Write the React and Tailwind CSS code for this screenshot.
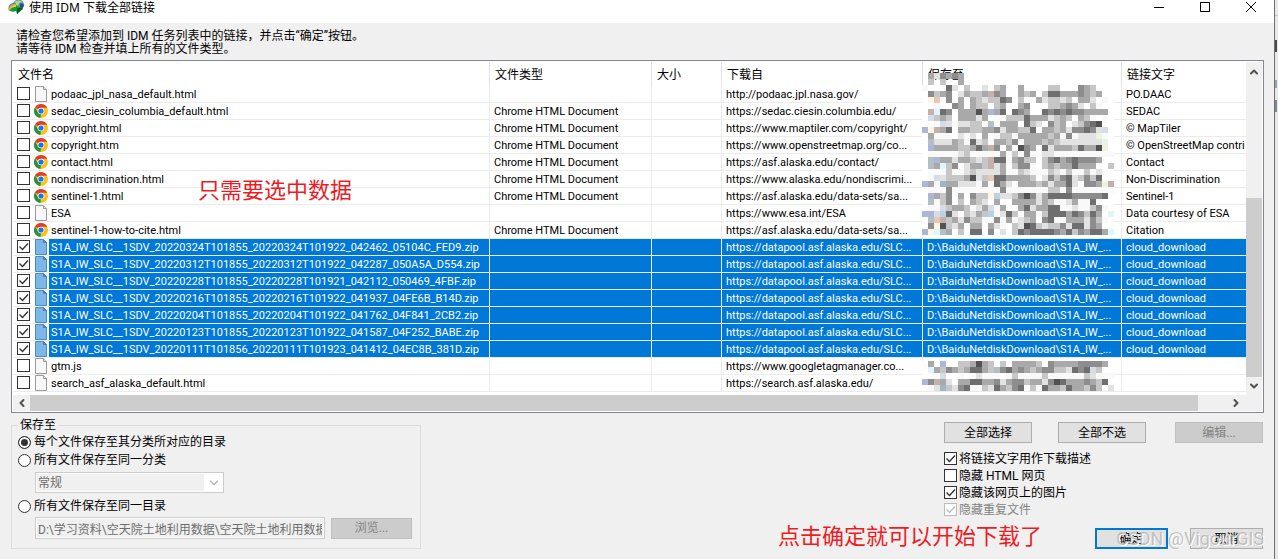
import React from 'react';
import { ChevronDown, ChevronLeft, ChevronRight, ChevronUp } from 'lucide-react';

const CHROME = 'Chrome HTML Document';
const SAVE_PATH = 'D:\\BaiduNetdiskDownload\\S1A_IW_...';

const files = [
  { name: 'podaac_jpl_nasa_default.html', from: 'http://podaac.jpl.nasa.gov/', text: 'PO.DAAC' },
  { name: 'sedac_ciesin_columbia_default.html', type: CHROME, from: 'https://sedac.ciesin.columbia.edu/', text: 'SEDAC' },
  { name: 'copyright.html', type: CHROME, from: 'https://www.maptiler.com/copyright/', text: '© MapTiler' },
  { name: 'copyright.htm', type: CHROME, from: 'https://www.openstreetmap.org/co...', text: '© OpenStreetMap contri' },
  { name: 'contact.html', type: CHROME, from: 'https://asf.alaska.edu/contact/', text: 'Contact' },
  { name: 'nondiscrimination.html', type: CHROME, from: 'https://www.alaska.edu/nondiscrimi...', text: 'Non-Discrimination' },
  { name: 'sentinel-1.html', type: CHROME, from: 'https://asf.alaska.edu/data-sets/sa...', text: 'Sentinel-1' },
  { name: 'ESA', from: 'https://www.esa.int/ESA', text: 'Data courtesy of ESA' },
  { name: 'sentinel-1-how-to-cite.html', type: CHROME, from: 'https://asf.alaska.edu/data-sets/sa...', text: 'Citation' },
  ...[
    'S1A_IW_SLC__1SDV_20220324T101855_20220324T101922_042462_05104C_FED9.zip',
    'S1A_IW_SLC__1SDV_20220312T101855_20220312T101922_042287_050A5A_D554.zip',
    'S1A_IW_SLC__1SDV_20220228T101855_20220228T101921_042112_050469_4FBF.zip',
    'S1A_IW_SLC__1SDV_20220216T101855_20220216T101922_041937_04FE6B_B14D.zip',
    'S1A_IW_SLC__1SDV_20220204T101855_20220204T101922_041762_04F841_2CB2.zip',
    'S1A_IW_SLC__1SDV_20220123T101855_20220123T101922_041587_04F252_BABE.zip',
    'S1A_IW_SLC__1SDV_20220111T101856_20220111T101923_041412_04EC8B_381D.zip',
  ].map((name) => ({
    name,
    from: 'https://datapool.asf.alaska.edu/SLC...',
    saveTo: SAVE_PATH,
    text: 'cloud_download',
    selected: true,
  })),
  { name: 'gtm.js', from: 'https://www.googletagmanager.co...', text: '' },
  { name: 'search_asf_alaska_default.html', from: 'https://search.asf.alaska.edu/', text: '' },
];

const columns = ['文件名', '文件类型', '大小', '下载自', '保存至', '链接文字'];

// One letter per block, light to dark, capitals are the tinted blocks
const shades = {
  w: '#f9f9f9', a: '#e2e2e2', b: '#c6c6c6', c: '#a9a9a9', d: '#8d8d8d', e: '#6f6f6f', f: '#525252',
  P: '#c6b0aa', O: '#e6c9b3', Y: '#fff5e0', C: '#e0f6ff', L: '#d6dde8', V: '#adb5d8', G: '#ecf3e0',
  T: '#9cb6c4', B: '#b9d3e6', S: '#b3bfc4',
};

const topBlocks = [
  '.cadcdc.........................',
  '.b.b..c.........................',
  'w...ea.b..a.bc..c....bb...dcb...',
  '.dbcd.acbbcPdc..cbc.beecccdcbc..',
  '.YOwd.c.cbabbed.b..cabbab.cca.w.',
  '..w..dc.cbb.bc..cd...bbcdca.bw..',
  '.PCed.cccfcVce.edc..edededdcccc.',
  '.Lbcb.cccac.wwbbbecccabcb.cbw.w.',
  '..wLawaabbwSwccc.eba.dbc.abdef..',
  'VYPce.ccbbccdaccbbe.ccbcaddedaL.',
  '.cwww.awa.c.wbbwcccccbcwdwaaaGw.',
  '.SaaacbweabwccbdwcccbcbaaaaaaaG.',
  '.VccccbbcecPd.cwfdc.eacccbeccfG.',
  '.wwwwwabwwwwwcwbwdwwaawwwwwwwwww',
  '.SVccaccbabPeewcdbb.bdecdedddc..',
  '.ScCbd.accbPac.bddw.bcbcceccc..b',
  '.wwwbwwabaaaacwwbawwwbawbwwbwaw.',
  '.wLabbbcfabOeeccccb.adbdeabdbe..',
  'VcwTccaaawcweca.cccbcaccea.ddcGP',
  '.wwwdwwwwwwwwdwwwwwwwbbwdwwwwwww',
  '.Vcbd.c.dbbYBaabdfdaceeeeddddde.',
  '.Swbd.b.cba.c..ccccacbwwacwwew..',
  '.wwLbccbwacLwc..ceacceewwawwbdw.',
  'VVLBea.bacbBwaeb.ccwbeeecedbec.C',
  '.SOPbcadbbwwdwcwabc.dewwcccadbw.',
  '.dYfbac.cc.caw.bafebabbdaeeadc..',
  'VYCSc.b.ee.d.a.bedeeeedcebdceecC',
];

const bottomBlocks = [
  '.c.V..bbcfcb.b.ccccb.dccccddddc.',
  '.CcbdcbceecbSdecdcbcddbbaedeLb..',
  '...L..w.wawww.wbwwwwbwwwwwwbawww',
  'VdPca.cceeccdacddbccadfecccdcbe.',
  '.waTbadew.baecbde.bweccbeccbdb.a',
];

const Mosaic = ({ rows, className }) => (
  <svg
    className={className}
    width="192"
    height={rows.length * 6}
    shapeRendering="crispEdges"
    aria-hidden="true"
  >
    {rows.map((row, y) =>
      [...row].map((key, x) => {
        // the first two rows only hide the start of the heading
        if (rows.length > 10 && y < 2 && (x > 6 || key === '.')) return null;
        return (
          <rect key={`${x}-${y}`} x={x * 6} y={y * 6} width="6" height="6" fill={shades[key] || '#ffffff'} />
        );
      })
    )}
  </svg>
);

const IdmIcon = () => (
  <svg width="17" height="17" viewBox="0 0 17 17" aria-hidden="true">
    <circle cx="10.500" cy="5" r="5.500" fill="#4f8fd6" />
    <path d="M6 3c2-3 6-3 8-1-1 1-3 0-3 2s-2 2-2 3-3-2-3-4z" fill="#b9d96a" />
    <path d="M12 4c2-1 3 0 4 1-1 3-3 4-4 4 1-2-1-3 0-5z" fill="#274b8f" />
    <path d="M1 11C-1 6 3 2 8 3L7 6C5 6 3 8 3 11z" fill="#4a7fd0" />
    <path d="M1 11C0 7 4 3 8 4L7 6C5 6 3 8 3 11z" fill="#e8a13a" />
    <path d="M2 11C1 8 4 5 8 5v2c-2 0-4 2-4 4z" fill="#d9d23c" />
    <path d="M2 11c0-3 3-4 6-4V5l7 4-6 5-1-3c-2 1-4 1-6 0z" fill="#179a2e" />
    <path d="M9 8h6l-6 6z" fill="#0b5c1a" />
  </svg>
);

const ChromeIcon = () => (
  <svg className="mt-px shrink-0" width="14" height="14" viewBox="0 0 14 14" aria-hidden="true">
    <circle cx="7" cy="7" r="7" fill="#fbc116" />
    <path d="M7 7L.94 3.500A7 7 0 0 1 13.060 3.500L13.060 3.800H7z" fill="#e33b2e" />
    <path d="M.94 3.500L4.200 8.600 7 10.200 6.400 14A7 7 0 0 1 .94 3.500z" fill="#229342" />
    <circle cx="7" cy="7" r="3.300" fill="#fff" />
    <circle cx="7" cy="7" r="2.600" fill="#1a73e8" />
  </svg>
);

const PageIcon = ({ selected }) => (
  <svg className="shrink-0" width="14" height="16" viewBox="0 0 14 16" aria-hidden="true">
    <path
      d="M1.500.5h8l3 3v12h-11z"
      fill={selected ? '#7db7e8' : '#f8f8f8'}
      stroke={selected ? '#4a8cc4' : '#9a9a9a'}
    />
    <path
      d="M9.500.5v3h3"
      fill={selected ? '#4a8cc4' : '#dddddd'}
      stroke={selected ? '#3f7fb5' : '#9a9a9a'}
    />
  </svg>
);

const CheckBox = ({ disabled, className = '', ...props }) => (
  <span className={`grid shrink-0 ${className}`}>
    <input
      type="checkbox"
      disabled={disabled}
      className="peer col-start-1 row-start-1 w-[13px] h-[13px] appearance-none border border-[#333333] bg-white disabled:border-[#bcbcbc]"
      {...props}
    />
    <svg
      className="pointer-events-none invisible col-start-1 row-start-1 peer-checked:visible"
      width="13"
      height="13"
      viewBox="0 0 13 13"
      fill="none"
      stroke={disabled ? '#bcbcbc' : '#333333'}
      strokeWidth="1.400"
      aria-hidden="true"
    >
      <path d="M2.500 6.500l3 3 5.500-6" />
    </svg>
  </span>
);

const CheckRow = ({ label, disabled, defaultChecked }) => (
  <label className={`flex h-[17px] items-center gap-0.5 ${disabled ? 'text-[#838383]' : ''}`}>
    <CheckBox disabled={disabled} defaultChecked={defaultChecked} />
    {label}
  </label>
);

const RadioRow = ({ label, defaultChecked }) => (
  <label className="flex h-[18px] items-center gap-[3px]">
    <input
      type="radio"
      name="target"
      defaultChecked={defaultChecked}
      className="w-[13px] h-[13px] appearance-none rounded-full border border-[#333333] bg-white checked:bg-[#333333] checked:shadow-[inset_0_0_0_2px_#ffffff]"
    />
    {label}
  </label>
);

const Button = ({ primary, className = '', ...props }) => (
  <button
    type="button"
    className={`h-[21px] bg-[#e1e1e1] leading-4 disabled:border-[#bfbfbf] disabled:bg-[#cccccc] disabled:text-[#838383] ${
      primary ? 'border-2 border-[#0078d7]' : 'border border-[#adadad]'
    } ${className}`}
    {...props}
  />
);

const FileRow = ({ file }) => {
  const cell = `h-[17px] overflow-hidden whitespace-nowrap border-b border-r border-[#ececec] pb-0 pl-1 pr-0 pt-0.5 leading-[14px] ${
    file.selected ? 'bg-[#0078d7] text-white' : ''
  }`;

  return (
    <tr>
      <td className="h-[17px] border-b border-r border-[#ececec] p-0">
        <div className="flex h-4 items-start">
          <span className="flex h-4 w-9 shrink-0 items-start gap-1 pl-1">
            <CheckBox className="mt-px" defaultChecked={file.selected} aria-label={file.name} />
            {file.type ? <ChromeIcon /> : <PageIcon selected={file.selected} />}
          </span>
          <span
            className={`h-4 min-w-0 flex-1 overflow-hidden whitespace-nowrap pl-0.5 pt-0.5 leading-[14px] ${
              file.selected ? 'bg-[#0078d7] text-white' : ''
            }`}
          >
            {file.name}
          </span>
        </div>
      </td>
      <td className={cell}>{file.type}</td>
      <td className={cell} />
      <td className={cell}>{file.from}</td>
      <td className={cell}>{file.saveTo}</td>
      <td className={`${cell} border-r-0`}>{file.text}</td>
    </tr>
  );
};

const FileList = () => (
  <div className="border border-[#828790] bg-white p-px">
    <div className="flex">
      <div className="relative min-w-0 flex-1 pb-[3px]">
        <table className="w-full table-fixed border-separate border-spacing-0">
          <colgroup>
            <col className="w-[477px]" />
            <col className="w-[162px]" />
            <col className="w-[70px]" />
            <col className="w-[201px]" />
            <col className="w-[199px]" />
            <col />
          </colgroup>
          <thead>
            <tr>
              {columns.map((title) => (
                <th
                  key={title}
                  className="h-[24px] border-r border-[#e0e0e0] pl-[5px] pt-0.5 text-left font-normal last:border-r-0"
                >
                  {title}
                </th>
              ))}
            </tr>
          </thead>
          <tbody className="text-[11px]">
            {files.map((file) => (
              <FileRow key={file.name} file={file} />
            ))}
          </tbody>
        </table>
        <Mosaic rows={topBlocks} className="absolute left-[909px] top-[11px]" />
        <Mosaic rows={bottomBlocks} className="absolute left-[909px] top-[299px]" />
      </div>
      <div className="flex w-4 flex-col items-center bg-[#f0f0f0] text-[#505050]">
        <div className="flex h-[136px] items-start pt-1">
          <ChevronUp size={12} strokeWidth={4} />
        </div>
        <div className="w-full flex-1 bg-[#cdcdcd]" />
        <div className="flex h-[18px] items-center">
          <ChevronDown size={12} strokeWidth={4} />
        </div>
      </div>
    </div>
    <div className="flex h-4 items-stretch bg-[#f0f0f0] text-[#505050]">
      <div className="flex w-[17px] items-center justify-center">
        <ChevronLeft size={12} strokeWidth={4} />
      </div>
      <div className="flex-1 bg-[#cdcdcd]" />
      <div className="flex w-16 items-center justify-end pr-5">
        <ChevronRight size={12} strokeWidth={4} />
      </div>
    </div>
  </div>
);

const SaveTo = () => (
  <fieldset className="w-[410px] border border-[#dcdcdc] pb-[9px] pl-[6px] pr-2">
    <legend className="px-0.5 leading-[15px]">保存至</legend>
    <RadioRow label="每个文件保存至其分类所对应的目录" defaultChecked />
    <RadioRow label="所有文件保存至同一分类" />
    <div className="mb-1 ml-[17px] mt-[3px] grid h-[21px] w-[189px]">
      <select
        disabled
        aria-label="分类"
        className="col-start-1 row-start-1 appearance-none border border-[#cccccc] bg-[#f0f0f0] pl-0.5 leading-4 text-[#6d6d6d] opacity-100 shadow-[inset_0_0_0_1px_#ffffff]"
      >
        <option>常规</option>
      </select>
      <span className="pointer-events-none col-start-1 row-start-1 my-px mr-px flex w-[19px] items-center justify-center justify-self-end bg-white text-[#b0b0b0]">
        <ChevronDown size={14} />
      </span>
    </div>
    <RadioRow label="所有文件保存至同一目录" />
    <div className="ml-[17px] mt-0.5 flex items-center gap-[6px]">
      <input
        type="text"
        disabled
        aria-label="目录"
        defaultValue="D:\学习资料\空天院土地利用数据\空天院土地利用数据"
        className="h-[22px] min-w-0 flex-1 border border-[#cccccc] bg-[#f0f0f0] px-0.5 text-[#6d6d6d] shadow-[inset_0_0_0_1px_#ffffff]"
      />
      <Button disabled className="w-[81px]">浏览...</Button>
    </div>
  </fieldset>
);

const Actions = () => (
  <div className="mr-px flex w-[319px] flex-col justify-between pt-1">
    <div>
      <div className="mb-[7px] flex gap-[26px]">
        <Button className="w-[88px]">全部选择</Button>
        <Button className="w-[88px]">全部不选</Button>
        <Button disabled className="ml-auto w-[88px]">编辑...</Button>
      </div>
      <CheckRow label="将链接文字用作下载描述" defaultChecked />
      <CheckRow label="隐藏 HTML 网页" />
      <CheckRow label="隐藏该网页上的图片" defaultChecked />
      <CheckRow label="隐藏重复文件" defaultChecked disabled />
    </div>
    <div className="flex justify-end gap-[22px]">
      <Button primary className="w-[73px]">确定</Button>
      <Button className="w-[73px]">取消</Button>
    </div>
  </div>
);

const TitleBar = () => (
  <header className="flex h-[23px] items-start justify-between bg-white pl-2 pr-[17px]">
    <div className="flex items-start gap-1">
      <IdmIcon />
      <h1 className="font-['Noto_Sans','Noto_Sans_CJK_SC',sans-serif] leading-4">使用 IDM 下载全部链接</h1>
    </div>
    <div className="flex gap-[34px] pt-0.5">
      <button type="button" aria-label="最小化">
        <svg width="12" height="12" stroke="#000" fill="none" shapeRendering="crispEdges">
          <path d="M1 5.500h10" />
        </svg>
      </button>
      <button type="button" aria-label="最大化">
        <svg width="12" height="12" stroke="#000" fill="none" shapeRendering="crispEdges">
          <path d="M1.500.5h9v9h-9z" />
        </svg>
      </button>
      <button type="button" aria-label="关闭">
        <svg width="12" height="12" stroke="#000" fill="none">
          <path d="M1 0l10 10M11 0L1 10" />
        </svg>
      </button>
    </div>
  </header>
);

const App = () => (
  <div className="flex min-h-screen overflow-hidden bg-[#f0f0f0] font-['Roboto','Noto_Sans_CJK_SC',sans-serif] text-xs text-black">
    <div className="relative flex min-w-0 flex-1 flex-col border-r border-[#707070]">
      <TitleBar />
      <main className="pb-[9px] pl-[11px] pr-[10px]">
        <p className="mb-1 ml-[5px] pt-[7px] leading-[13px]">
          请检查您希望添加到 IDM 任务列表中的链接，并点击“确定”按钮。
          <br />
          请等待 IDM 检查并填上所有的文件类型。
        </p>
        <FileList />
        <div className="mt-[5px] flex justify-between">
          <SaveTo />
          <Actions />
        </div>
      </main>

      {/* Notes drawn over the window */}
      <p className="pointer-events-none absolute left-[198px] top-[175px] text-[22px] leading-8 text-[#ed1c24]">
        只需要选中数据
      </p>
      <p className="pointer-events-none absolute bottom-[6px] right-[232px] text-[22px] leading-8 text-[#ed1c24]">
        点击确定就可以开始下载了
      </p>
      <p className="pointer-events-none absolute bottom-[6px] right-[10px] text-lg leading-7 text-[#b4b4b4]/80 [text-shadow:1px_1px_0_#ffffff]">
        CSDN @VigourGIS
      </p>
    </div>
    <div className="flex w-[3px] flex-col bg-[#e8e8e8] pt-[15px]">
      <div className="h-px bg-[#c8c8c8]" />
      <div className="mt-[24px] h-3 w-0.5 bg-[#4a4a4a]" />
      <div className="mt-[28px] h-2 w-0.5 bg-[#8fa3bf]" />
      <div className="mt-3 h-3 w-0.5 bg-[#7b8796]" />
    </div>
  </div>
);

export default App;
